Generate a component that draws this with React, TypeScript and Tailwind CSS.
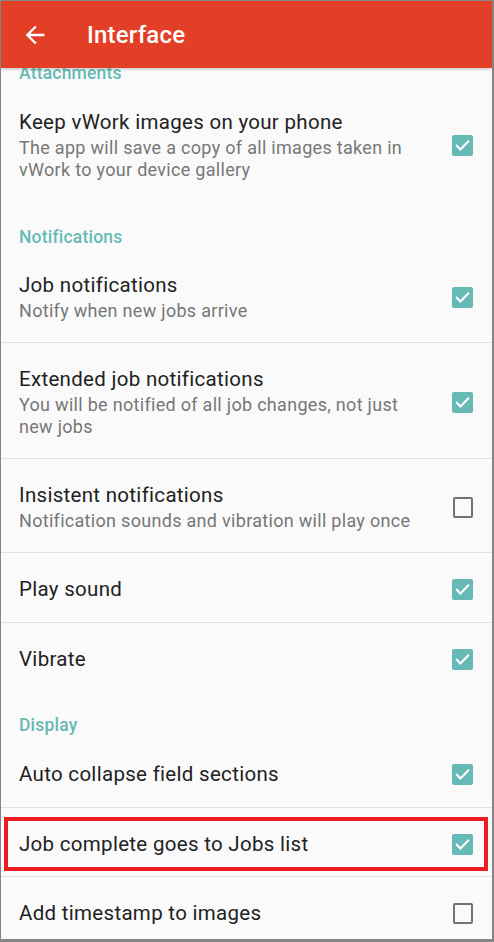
import React from "react";

const Check = ({ on }: { on: boolean }) =>
  on ? (
    <div className="w-[21px] h-[21px] rounded-[2px] bg-[#66b9b4] flex items-center justify-center shrink-0">
      <svg width="17" height="17" viewBox="0 0 24 24">
        <path d="M4 12.5l5 5L20 6.5" fill="none" stroke="#fff" strokeWidth="3" strokeLinecap="square" />
      </svg>
    </div>
  ) : (
    <div className="w-[20px] h-[21px] rounded-[2px] border-2 border-[#737373] shrink-0" />
  );

const Row = ({
  title,
  sub,
  on,
  divider = true,
  pb,
}: {
  title: string;
  sub?: string[];
  on: boolean;
  divider?: boolean;
  pb?: string;
}) => {
  const pad = sub
    ? divider
      ? "pt-[24px] pb-[20px] border-b border-[#e2e2e2]"
      : `pt-[24px] ${pb ?? "pb-[21px]"}`
    : divider
    ? "pt-[24px] pb-[21px] border-b border-[#e2e2e2]"
    : "pt-[24px] pb-[22px]";
  return (
    <div className={`flex items-center pl-[18px] pr-[19px] ${pad}`}>
      <div className="flex-1">
        <div className="text-[20.5px] leading-[24px] tracking-[0.3px] text-[#222]">{title}</div>
        {sub && (
          <div className="mt-[3px]">
            {sub.map((s) => (
              <div key={s} className="text-[18px] leading-[22px] tracking-[0.3px] text-[#777]">{s}</div>
            ))}
          </div>
        )}
      </div>
      <Check on={on} />
    </div>
  );
};

const Header = ({ text, pt, h }: { text: string; pt: string; h: string }) => (
  <div className={`pl-[18px] ${pt} ${h} text-[17.5px] leading-[20px] tracking-[0.2px] font-medium text-[#66bab5]`}>{text}</div>
);

export default function App() {
  return (
    <div
      className="w-[494px] h-[942px] overflow-hidden bg-[#fafafa] border-t border-l border-r-[2px] border-b-[3px] border-[#858585] flex flex-col"
      style={{ fontFamily: "Roboto, 'Noto Sans', sans-serif" }}
    >
      <div className="relative z-10 h-[67px] bg-[#e33f26] flex items-center shrink-0 shadow-[0_1px_3px_rgba(0,0,0,0.25)]">
        <div className="w-[68px] flex items-center pl-[20px]">
          <svg width="28" height="28" viewBox="0 0 24 24">
            <path d="M20 11H7.83l5.59-5.59L12 4l-8 8 8 8 1.41-1.41L7.83 13H20v-2z" fill="#fff" />
          </svg>
        </div>
        <div className="pl-[18px] text-[24px] tracking-[0.2px] font-medium text-white leading-none">Interface</div>
      </div>
      <div className="flex-1 overflow-hidden">
        <div className="pl-[18px] -mt-[5px] h-[23px] text-[17.5px] leading-[20px] tracking-[0.2px] font-medium text-[#66bab5]">Attachments</div>
        <Row
          title="Keep vWork images on your phone"
          sub={["The app will save a copy of all images taken in", "vWork to your device gallery"]}
          on
          divider={false}
          pb="pb-[22px]"
        />
        <Header text="Notifications" pt="pt-[24px]" h="h-[46px]" />
        <Row title="Job notifications" sub={["Notify when new jobs arrive"]} on />
        <Row
          title="Extended job notifications"
          sub={["You will be notified of all job changes, not just", "new jobs"]}
          on
        />
        <Row title="Insistent notifications" sub={["Notification sounds and vibration will play once"]} on={false} />
        <Row title="Play sound" on />
        <Row title="Vibrate" on divider={false} />
        <Header text="Display" pt="pt-[22px]" h="h-[45px]" />
        <Row title="Auto collapse field sections" on />
        <div className="border-b border-[#e2e2e2] pt-[9px] pb-[5px] pl-[3px] pr-[4px]">
          <div className="border-[4px] border-[#ec1c24] flex items-center pl-[11px] pr-[11px] h-[54px]">
            <div className="flex-1 text-[20.5px] leading-[24px] tracking-[0.3px] text-[#222]">Job complete goes to Jobs list</div>
            <Check on />
          </div>
        </div>
        <Row title="Add timestamp to images" on={false} divider={false} />
      </div>
    </div>
  );
}
